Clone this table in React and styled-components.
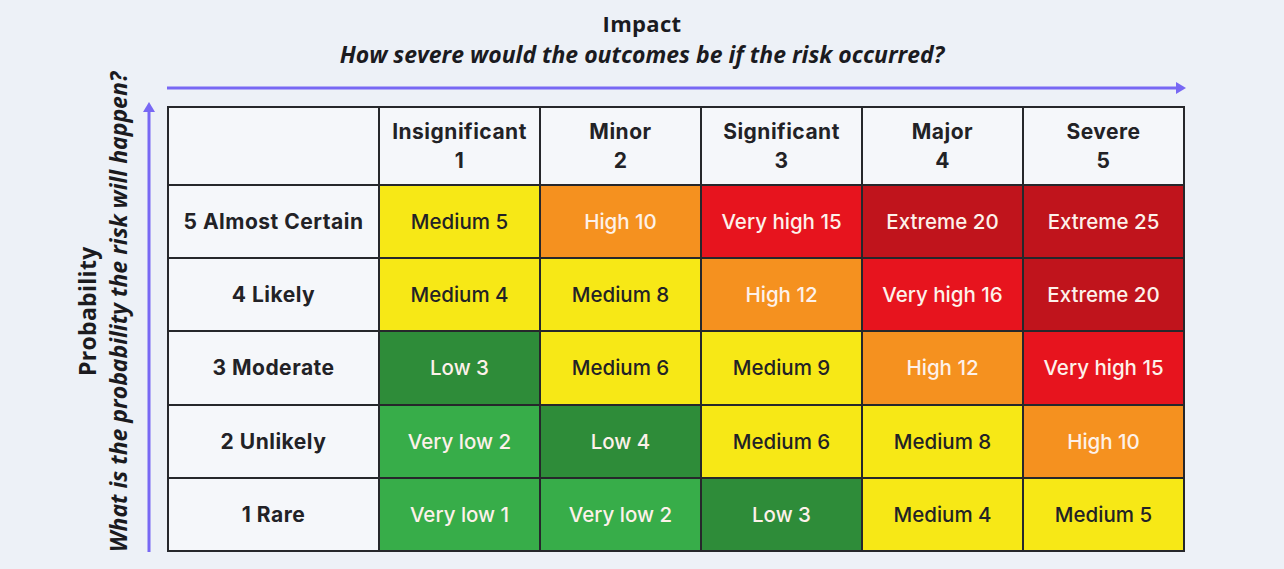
import React from "react";
import styled, { createGlobalStyle } from "styled-components";

const GlobalStyle = createGlobalStyle`
  html, body {
    margin: 0;
    padding: 0;
    background: #edf1f7;
  }
  body {
    font-family: "Open Sans", "Liberation Sans", sans-serif;
  }
`;

const COLORS = {
  Y: "#f7e816",
  O: "#f5911f",
  R: "#e7141e",
  DR: "#c0141c",
  DG: "#2e8c39",
  LG: "#37ad49",
};

const impacts = [
  ["Insignificant", 1],
  ["Minor", 2],
  ["Significant", 3],
  ["Major", 4],
  ["Severe", 5],
];

const rows = [
  ["5 Almost Certain", [["Medium 5", "Y"], ["High 10", "O"], ["Very high 15", "R"], ["Extreme 20", "DR"], ["Extreme 25", "DR"]]],
  ["4 Likely", [["Medium 4", "Y"], ["Medium 8", "Y"], ["High 12", "O"], ["Very high 16", "R"], ["Extreme 20", "DR"]]],
  ["3 Moderate", [["Low 3", "DG"], ["Medium 6", "Y"], ["Medium 9", "Y"], ["High 12", "O"], ["Very high 15", "R"]]],
  ["2 Unlikely", [["Very low 2", "LG"], ["Low 4", "DG"], ["Medium 6", "Y"], ["Medium 8", "Y"], ["High 10", "O"]]],
  ["1 Rare", [["Very low 1", "LG"], ["Very low 2", "LG"], ["Low 3", "DG"], ["Medium 4", "Y"], ["Medium 5", "Y"]]],
];

const ARROW = "#7868f4";

const App = () => {
  return (
    <StyledPage>
      <GlobalStyle />
      <StyledHeading>
        <h1>Impact</h1>
        <p>How severe would the outcomes be if the risk occurred?</p>
      </StyledHeading>
      <StyledBody>
        <StyledSideLabel>
          <strong>Probability</strong>
          <em>What is the probability the risk will happen?</em>
        </StyledSideLabel>
        <StyledVArrow width="14" height="450" viewBox="0 0 14 450">
          <line x1="7" y1="8" x2="7" y2="450" stroke={ARROW} strokeWidth="3" />
          <polygon points="7,0 13,10 1,10" fill={ARROW} />
        </StyledVArrow>
        <StyledHArrow width="1020" height="14" viewBox="0 0 1020 14">
          <line x1="0" y1="7" x2="1010" y2="7" stroke={ARROW} strokeWidth="3" />
          <polygon points="1019,7 1009,1 1009,13" fill={ARROW} />
        </StyledHArrow>
        <StyledMatrix>
          <StyledCell $head />
          {impacts.map(([name, n]) => (
            <StyledCell $head key={name}>
              {name}
              <br />
              {n}
            </StyledCell>
          ))}
          {rows.map(([label, cells]) => (
            <React.Fragment key={label}>
              <StyledCell $head>{label}</StyledCell>
              {cells.map(([text, tone], i) => (
                <StyledCell key={i} $bg={COLORS[tone]} $dark={tone === "Y"}>
                  {text}
                </StyledCell>
              ))}
            </React.Fragment>
          ))}
        </StyledMatrix>
      </StyledBody>
    </StyledPage>
  );
};

export default App;

const StyledPage = styled.div`
  width: 1284px;
  height: 569px;
  box-sizing: border-box;
  padding-top: 9px;
  background: #edf1f7;
  overflow: hidden;
`;

const StyledHeading = styled.div`
  text-align: center;
  color: #1b1b1f;

  h1 {
    margin: 0;
    font-size: 22px;
    line-height: 28px;
    font-weight: 700;
    letter-spacing: 0.3px;
  }

  p {
    margin: 0;
    font-size: 23px;
    line-height: 34px;
    font-weight: 700;
    font-style: italic;
    letter-spacing: 0;
  }
`;

const StyledBody = styled.div`
  display: grid;
  grid-template-columns: 56px 36px 1018px;
  grid-template-rows: 35px 446px;
  padding-left: 75px;
`;

const StyledSideLabel = styled.div`
  grid-column: 1;
  grid-row: 1 / 3;
  writing-mode: vertical-rl;
  transform: rotate(180deg);
  display: flex;
  flex-direction: column;
  justify-content: center;
  align-items: center;
  color: #1b1b1f;
  font-size: 23px;
  line-height: 31px;
  font-weight: 700;
  letter-spacing: 0;
  white-space: nowrap;

  strong {
    font-weight: 700;
    letter-spacing: 0.3px;
  }
  em {
    font-style: italic;
  }
`;

const StyledVArrow = styled.svg`
  grid-column: 2;
  grid-row: 1 / 3;
  justify-self: center;
  align-self: end;
  display: block;
`;

const StyledHArrow = styled.svg`
  grid-column: 3;
  grid-row: 1;
  align-self: start;
  margin-top: 10px;
  display: block;
`;

const StyledMatrix = styled.div`
  grid-column: 3;
  grid-row: 2;
  display: grid;
  grid-template-columns: 209px repeat(5, 1fr);
  grid-template-rows: 76px repeat(5, 1fr);
  gap: 2px;
  padding: 2px;
  background: #26272b;
  font-family: "Inter", "Noto Sans", sans-serif;
`;

const StyledCell = styled.div`
  display: flex;
  align-items: center;
  justify-content: center;
  text-align: center;
  font-size: ${(p) => (p.$head ? "21px" : "20.5px")};
  line-height: 29px;
  letter-spacing: ${(p) => (p.$head ? "0.5px" : "0")};
  font-weight: ${(p) => (p.$head ? 700 : 500)};
  background: ${(p) => p.$bg || "#f5f7fa"};
  color: ${(p) => (p.$head || p.$dark ? "#222226" : "#fdf1ea")};
`;
